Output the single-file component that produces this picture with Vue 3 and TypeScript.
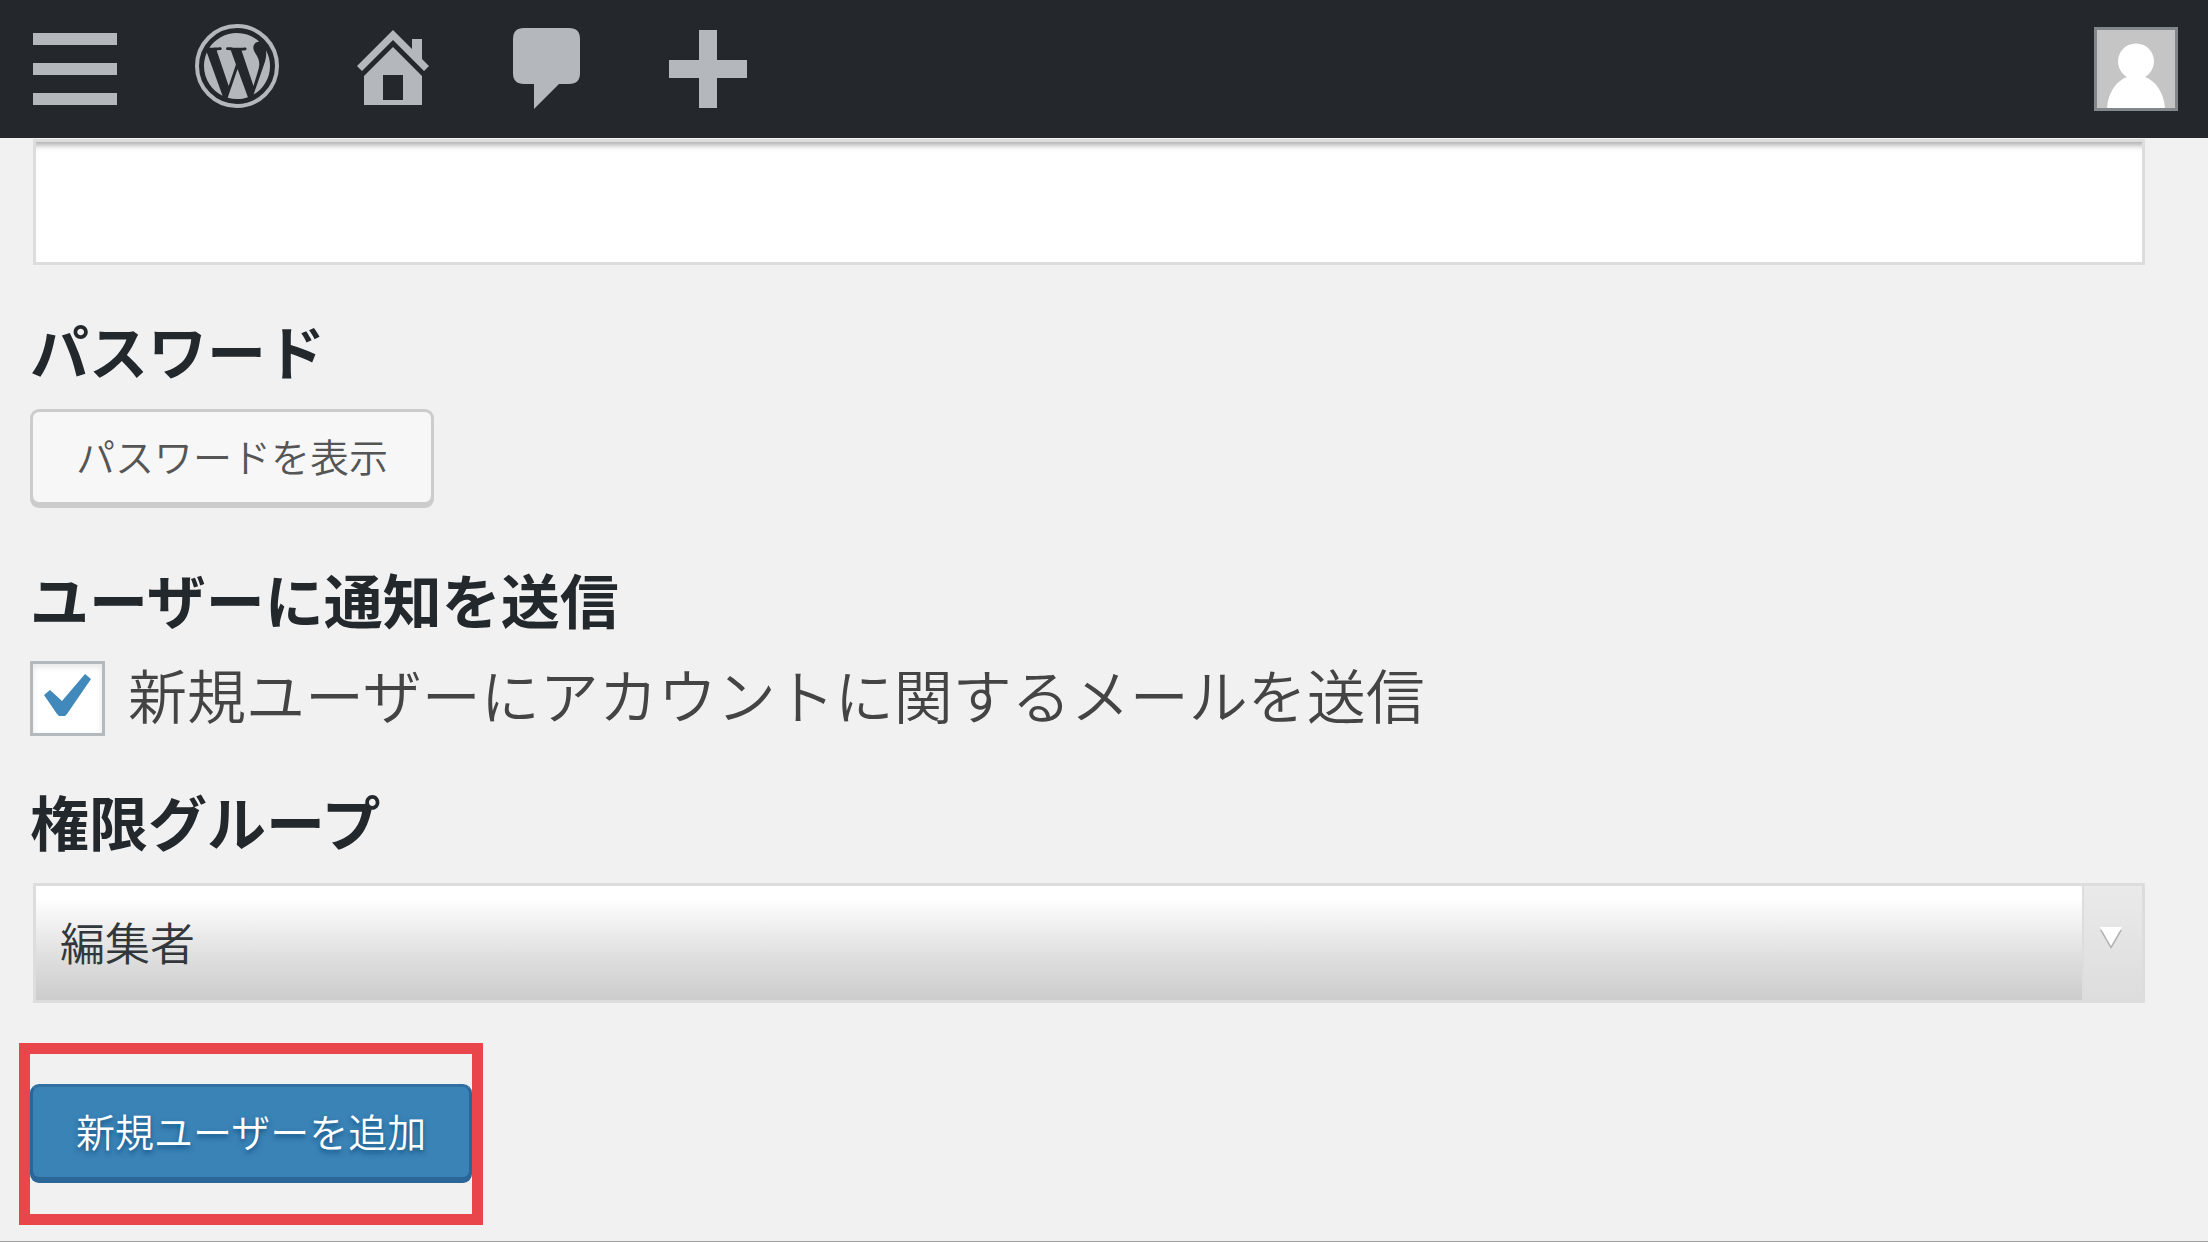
<script setup lang="ts">
import { ref } from 'vue'

const email = ref('')
const sendNotification = ref(true)
const role = ref('editor')
const roles = [{ value: 'editor', label: '編集者' }]
</script>

<template>
  <div class="page">
    <header class="admin-bar">
      <nav class="menu" aria-label="ツールバー">
        <button type="button" class="bar-item" aria-label="メニュー">
          <svg width="84" height="84" viewBox="0 0 84 84">
            <path d="M0 9h84v12H0zM0 39h84v12H0zM0 69h84v12H0z" />
          </svg>
        </button>
        <a href="#" class="bar-item" aria-label="WordPress">
          <svg width="84" height="84" viewBox="0 0 84 84">
            <circle cx="42" cy="42" r="40" fill="none" stroke="#b4b8bd" stroke-width="4" />
            <g transform="translate(42 42) scale(3.06) translate(-12 -12)">
              <path d="M21.469 6.825c.84 1.537 1.318 3.3 1.318 5.175 0 3.979-2.156 7.456-5.363 9.325l3.295-9.527c.615-1.54.82-2.771.82-3.864 0-.405-.026-.78-.07-1.11" />
              <path d="M13.488 6.93c.647-.03 1.232-.105 1.232-.105.582-.075.514-.93-.067-.899 0 0-1.755.135-2.88.135-1.064 0-2.85-.15-2.85-.15-.585-.03-.661.855-.075.885 0 0 .54.061 1.125.09l1.68 4.605-2.37 7.08L5.354 6.9c.649-.03 1.234-.1 1.234-.1.585-.075.516-.93-.065-.896 0 0-1.746.138-2.874.138-.2 0-.438-.008-.69-.015C4.911 3.15 8.235 1.215 12 1.215c2.809 0 5.365 1.072 7.286 2.833-.046-.003-.091-.009-.141-.009-1.06 0-1.812.923-1.812 1.914 0 .89.513 1.643 1.06 2.531.411.72.89 1.643.89 2.977 0 .915-.354 1.994-.821 3.479l-1.075 3.585-3.9-11.61z" />
              <path d="M12 22.784c-1.059 0-2.081-.153-3.048-.437l3.237-9.406 3.315 9.087c.024.053.05.101.078.149-1.12.393-2.325.609-3.582.609" />
              <path d="M1.211 12c0-1.564.336-3.05.935-4.39L7.29 21.709C3.694 19.96 1.212 16.271 1.211 12" />
            </g>
          </svg>
        </a>
        <a href="#" class="bar-item" aria-label="サイトを表示">
          <svg width="72" height="84" viewBox="0 0 72 84">
            <path d="M36 6L55 25V15H65V35L72 42L67 47L36 16L5 47L0 42Z" />
            <path fill-rule="evenodd" d="M36 23L65 52V81H7V52ZM26 51V76H46V51Z" />
          </svg>
        </a>
        <a href="#" class="bar-item" aria-label="コメント">
          <svg width="78" height="84" viewBox="0 0 78 84">
            <path d="M17 4H62Q73 4 73 15V49Q73 60 62 60H52L27 85V60H17Q6 60 6 49V15Q6 4 17 4Z" />
          </svg>
        </a>
        <a href="#" class="bar-item" aria-label="新規追加">
          <svg width="90" height="84" viewBox="0 0 90 84">
            <path d="M36 6h18v30h30v18H54v30H36V54H6V36h30z" />
          </svg>
        </a>
      </nav>
      <a href="#" class="account" aria-label="アカウント">
        <svg width="78" height="78" viewBox="0 0 78 78">
          <path fill="#fff" d="M10 78C11 63 19 51 30 47A18 18 0 1 1 48 47C59 51 67 63 68 78Z" />
        </svg>
      </a>
    </header>

    <form class="form" @submit.prevent>
      <input v-model="email" class="text-field" type="text" aria-label="メールアドレス" />

      <section class="field">
        <h2 class="heading tight">パスワード</h2>
        <button type="button" class="button">パスワードを表示</button>
      </section>

      <section class="field">
        <h2 class="heading">ユーザーに通知を送信</h2>
        <div class="check-row">
          <span class="checkbox">
            <input id="send-notification" v-model="sendNotification" type="checkbox" />
            <svg v-if="sendNotification" class="tick" width="69" height="69" viewBox="0 0 69 69">
              <path d="M11 31L17 26L29 37L52 10L58 15L34 50L32 52H26L24 50Z" />
            </svg>
          </span>
          <label for="send-notification">新規ユーザーにアカウントに関するメールを送信</label>
        </div>
      </section>

      <section class="field">
        <label class="heading" for="role">権限グループ</label>
        <div class="select-box">
          <select id="role" v-model="role">
            <option v-for="r in roles" :key="r.value" :value="r.value">{{ r.label }}</option>
          </select>
          <span class="select-arrow" aria-hidden="true">
            <svg width="24" height="24" viewBox="0 0 24 24">
              <path fill="#b0b0b0" d="M1 4H23L12 23Z" />
              <path fill="#fff" d="M1 1H23L12 20Z" />
            </svg>
          </span>
        </div>
      </section>

      <div class="highlight">
        <button type="submit" class="button primary">新規ユーザーを追加</button>
      </div>
    </form>
  </div>
</template>

<style>
body {
  margin: 0;
  background: #f1f1f1;
}
</style>

<style scoped>
.page {
  box-sizing: border-box;
  min-height: 100vh;
  border-bottom: 1px solid #a0a0a0;
  background: #f1f1f1;
  color: #444;
  font-family: 'Noto Sans CJK JP', sans-serif;
}

.admin-bar {
  display: flex;
  justify-content: space-between;
  align-items: center;
  box-sizing: border-box;
  height: 138px;
  padding: 0 30px 0 33px;
  background: #24282d;
}

.menu {
  display: flex;
  gap: 78px;
  padding-bottom: 6px;
}

.bar-item {
  display: flex;
  padding: 0;
  border: 0;
  background: none;
}

.bar-item svg {
  overflow: visible;
  fill: #b4b8bd;
}

.account {
  display: flex;
  border: 3px solid #82878c;
  background: #c5c5c5;
}

.form {
  display: flex;
  flex-direction: column;
  padding: 1px 63px 16px 30px;
}

.text-field {
  box-sizing: border-box;
  height: 126px;
  margin: 0 0 0 3px;
  padding: 0 24px;
  border: 3px solid #ddd;
  border-radius: 0;
  outline: 0;
  background: #fff;
  box-shadow: inset 0 9px 6px -6px rgba(0, 0, 0, 0.35);
  font: inherit;
  font-size: 45px;
}

.field {
  display: flex;
  flex-direction: column;
  align-items: flex-start;
  margin-top: 44px;
}

.heading {
  margin: 0 0 21px;
  color: #23282d;
  font-size: 59px;
  font-weight: 700;
  line-height: 82px;
}

.heading.tight {
  margin-bottom: 18px;
}

.button {
  box-sizing: border-box;
  height: 96px;
  margin: 0 0 9px;
  padding: 0 43px 4px;
  border: 3px solid #ccc;
  border-radius: 9px;
  background: #f7f7f7;
  box-shadow: 0 3px 0 #ccc;
  color: #555;
  font: inherit;
  font-size: 39px;
  font-weight: 350;
  line-height: 86px;
}

.check-row {
  display: flex;
  gap: 23px;
  height: 75px;
  font-size: 59px;
  font-weight: 350;
  line-height: 65px;
}

.checkbox {
  position: relative;
  display: flex;
}

.checkbox input {
  appearance: none;
  box-sizing: border-box;
  width: 75px;
  height: 75px;
  margin: 0;
  border: 3px solid #b4b9be;
  background: #fff;
  box-shadow: inset 0 3px 6px rgba(0, 0, 0, 0.1);
}

.tick {
  position: absolute;
  inset: 3px;
  fill: #4189ba;
  pointer-events: none;
}

.select-box {
  position: relative;
  box-sizing: border-box;
  align-self: stretch;
  height: 120px;
  margin-left: 3px;
  border: 3px solid #ddd;
}

.select-box select {
  appearance: none;
  width: 100%;
  height: 100%;
  padding: 0 84px 4px 24px;
  border: 0;
  border-radius: 0;
  background: linear-gradient(#fff 10%, #e0e0e0 60%, #ccc);
  color: #32373c;
  font: inherit;
  font-size: 45px;
  font-weight: 350;
}

.select-arrow {
  position: absolute;
  inset: 0 0 0 auto;
  display: flex;
  align-items: center;
  justify-content: center;
  box-sizing: border-box;
  width: 60px;
  padding: 0 5px 10px 0;
  border-left: 2px solid #ddd;
  background: linear-gradient(#eaeaea, #ddd);
  pointer-events: none;
}

.highlight {
  align-self: flex-start;
  margin: 40px 0 0 -11px;
  padding: 30px 0 25px;
  border: 11px solid #e8464a;
}

.primary {
  padding: 0 43px 4px;
  border-color: #3070a3 #2b6698 #2b6698;
  background: #3a83b6;
  box-shadow: 0 3px 0 #2b6698;
  color: #fff;
  text-shadow: 0 3px 5px rgba(0, 60, 110, 0.7);
}
</style>
